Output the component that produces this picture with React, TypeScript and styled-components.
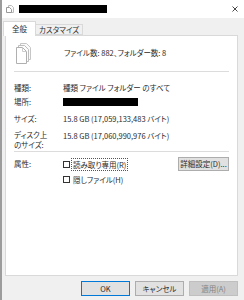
import React from "react";
import styled, { createGlobalStyle } from "styled-components";

const Global = createGlobalStyle`
  html, body { margin: 0; padding: 0; background: #f0f0f0; }
  body {
    font-family: "Noto Sans CJK JP", "Noto Sans", sans-serif;
    font-feature-settings: "palt";
    color: #2b2b2b;
  }
`;

const Window = styled.div`
  width: 244px;
  height: 300px;
  box-sizing: border-box;
  background: #f0f0f0;
  border-left: 2px solid #9c9c9c;
  display: flex;
  flex-direction: column;
  font-size: 7.5px;
  overflow: hidden;
`;

const TitleBar = styled.div`
  height: 18px;
  flex: none;
  background: #ffffff;
  display: flex;
  align-items: center;
  padding: 0 6px 0 4px;
  gap: 5px;
`;

const Redacted = styled.div<{ $w: number; $h: number }>`
  width: ${(p) => p.$w}px;
  height: ${(p) => p.$h}px;
  background: #000;
  flex: none;
`;

const CloseBox = styled.div`
  margin-left: auto;
  display: flex;
  align-items: center;
`;

const TabStrip = styled.div`
  height: 17px;
  flex: none;
  display: flex;
  align-items: flex-end;
  padding-left: 1px;
  position: relative;
  z-index: 1;
`;

const Tab = styled.div<{ $active?: boolean }>`
  box-sizing: border-box;
  height: ${(p) => (p.$active ? 15 : 11)}px;
  margin-bottom: ${(p) => (p.$active ? -1 : 0)}px;
  padding: 0 ${(p) => (p.$active ? 8 : 3)}px;
  display: flex;
  align-items: center;
  background: ${(p) => (p.$active ? "#ffffff" : "#f0f0f0")};
  border: 1px solid #d9d9d9;
  border-bottom: ${(p) => (p.$active ? "none" : "1px solid #d9d9d9")};
  ${(p) => (!p.$active ? "border-left: none;" : "")}
  line-height: 1;
  white-space: nowrap;
`;

const Panel = styled.div`
  box-sizing: border-box;
  height: 241px;
  margin: 0 6px 0 3px;
  background: #ffffff;
  border: 1px solid #d9d9d9;
  padding: 4px 0 0 8px;
  display: flex;
  flex-direction: column;
  flex: none;
`;

const HeaderRow = styled.div`
  height: 26px;
  display: flex;
  align-items: center;
`;

const IconCell = styled.div`
  width: 49px;
  flex: none;
  display: flex;
  padding-left: 1px;
`;

const Separator = styled.div<{ $top: number }>`
  height: 1px;
  margin: ${(p) => p.$top}px 8px 0 0;
  background: #dcdcdc;
`;

const Row = styled.div<{ $top: number; $h?: number }>`
  margin-top: ${(p) => p.$top}px;
  min-height: ${(p) => p.$h ?? 12}px;
  display: flex;
  align-items: center;
  padding-right: 8px;
`;

const Label = styled.div`
  width: 49px;
  flex: none;
  line-height: 10px;
  white-space: nowrap;
`;

const Value = styled.div<{ $top?: boolean }>`
  flex: 1;
  white-space: nowrap;
  line-height: 10px;
  display: flex;
  align-items: center;
  ${(p) => (p.$top ? "align-self: flex-start; margin-top: 1px;" : "")}
`;

const CheckWrap = styled.label`
  display: flex;
  align-items: center;
  gap: 2px;
`;

const Box = styled.span`
  width: 7px;
  height: 7px;
  box-sizing: border-box;
  border: 1px solid #333;
  background: #fff;
  flex: none;
`;

const CheckText = styled.span<{ $focus?: boolean }>`
  padding: 1px 1px;
  outline: ${(p) => (p.$focus ? "1px dotted #555" : "none")};
  line-height: 9px;
`;

const Button = styled.div<{ $variant?: "default" | "disabled" }>`
  box-sizing: border-box;
  height: 14px;
  display: flex;
  align-items: center;
  justify-content: center;
  padding: 0 3px;
  background: ${(p) => (p.$variant === "disabled" ? "#cccccc" : "#e1e1e1")};
  border: 1px solid
    ${(p) =>
      p.$variant === "default"
        ? "#0078d7"
        : p.$variant === "disabled"
        ? "#bfbfbf"
        : "#adadad"};
  color: ${(p) => (p.$variant === "disabled" ? "#838383" : "#2b2b2b")};
  white-space: nowrap;
  line-height: 1;
`;

const DetailButton = styled(Button)`
  margin-left: auto;
  width: 51px;
  padding: 0;
`;

const Footer = styled.div`
  display: flex;
  justify-content: flex-end;
  gap: 5px;
  padding: 5px 6px 0 0;
`;

const FooterButton = styled(Button)`
  width: 49px;
  height: 15px;
`;

const StackIcon = () => (
  <svg width="18" height="22" viewBox="0 0 18 22">
    <path d="M5.5 1.5h6l4 4v12h-10z" fill="#fafafa" stroke="#c6c6c6" />
    <path d="M3.5 3.5h6l4 4v12h-10z" fill="#fcfcfc" stroke="#bdbdbd" />
    <path d="M1.5 5.5h6l4 4v12h-10z" fill="#ffffff" stroke="#b0b0b0" />
    <path d="M7.5 5.5v4h4" fill="none" stroke="#cccccc" />
  </svg>
);

const SmallIcon = () => (
  <svg width="8" height="8" viewBox="0 0 8 8">
    <path d="M2.5 0.5h3l2 2v5h-5z" fill="#fafafa" stroke="#bbb" />
    <path d="M0.5 2.5h3l2 2v3h-5z" fill="#fff" stroke="#999" />
  </svg>
);

const CloseIcon = () => (
  <svg width="6" height="6" viewBox="0 0 6 6">
    <path d="M0.5 0.5l5 5M5.5 0.5l-5 5" stroke="#333" strokeWidth="0.9" />
  </svg>
);

export default function App() {
  return (
    <>
      <Global />
      <Window>
        <TitleBar>
          <SmallIcon />
          <Redacted $w={88} $h={8} />
          <CloseBox>
            <CloseIcon />
          </CloseBox>
        </TitleBar>
        <TabStrip>
          <Tab $active>全般</Tab>
          <Tab>カスタマイズ</Tab>
        </TabStrip>
        <Panel>
          <HeaderRow>
            <IconCell>
              <StackIcon />
            </IconCell>
            <Value>ファイル数: 882、フォルダー数: 8</Value>
          </HeaderRow>
          <Separator $top={5} />
          <Row $top={10}>
            <Label>種類:</Label>
            <Value>種類 ファイル フォルダー のすべて</Value>
          </Row>
          <Row $top={2}>
            <Label>場所:</Label>
            <Value>
              <Redacted $w={75} $h={8} />
            </Value>
          </Row>
          <Row $top={5}>
            <Label>サイズ:</Label>
            <Value>15.8 GB (17,059,133,483 バイト)</Value>
          </Row>
          <Row $top={5} $h={20}>
            <Label>
              ディスク上
              <br />
              のサイズ:
            </Label>
            <Value $top>15.8 GB (17,060,990,976 バイト)</Value>
          </Row>
          <Separator $top={1} />
          <Row $top={5} $h={14}>
            <Label>属性:</Label>
            <CheckWrap>
              <Box />
              <CheckText $focus>読み取り専用(R)</CheckText>
            </CheckWrap>
            <DetailButton>詳細設定(D)...</DetailButton>
          </Row>
          <Row $top={2}>
            <Label />
            <CheckWrap>
              <Box />
              <CheckText>隠しファイル(H)</CheckText>
            </CheckWrap>
          </Row>
        </Panel>
        <Footer>
          <FooterButton $variant="default">OK</FooterButton>
          <FooterButton>キャンセル</FooterButton>
          <FooterButton $variant="disabled">適用(A)</FooterButton>
        </Footer>
      </Window>
    </>
  );
}
